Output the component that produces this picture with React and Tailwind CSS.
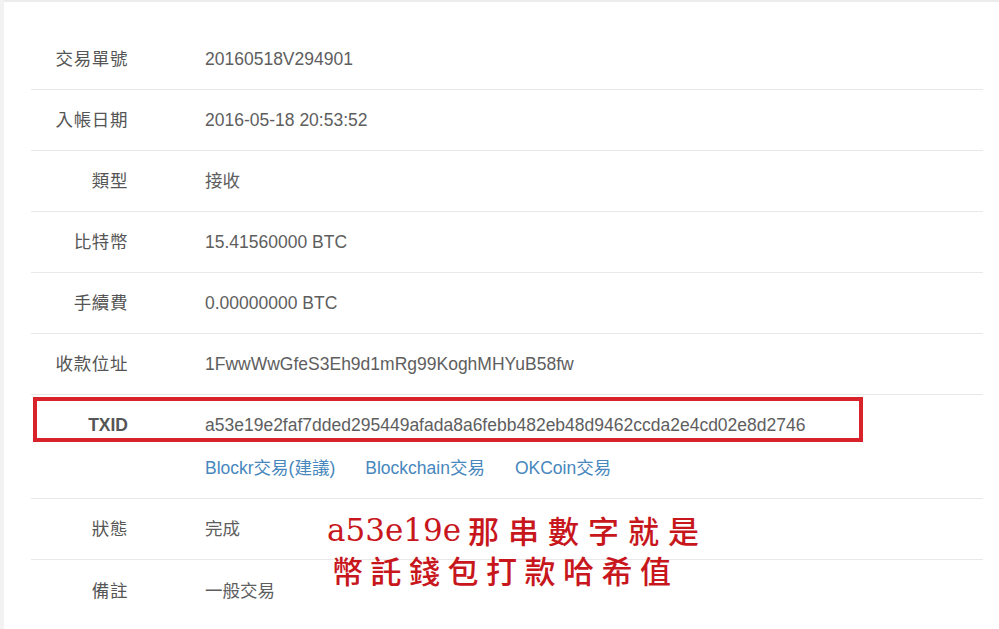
import React from "react";

const rows = [
  { label: "交易單號", value: "20160518V294901" },
  { label: "入帳日期", value: "2016-05-18 20:53:52" },
  { label: "類型", value: "接收" },
  { label: "比特幣", value: "15.41560000 BTC" },
  { label: "手續費", value: "0.00000000 BTC" },
  { label: "收款位址", value: "1FwwWwGfeS3Eh9d1mRg99KoghMHYuB58fw" },
];

const font = { fontFamily: '"Liberation Sans", "Noto Sans CJK TC", sans-serif' };

function Row({ label, value, bold, last }) {
  return (
    <div className={`flex h-[61px] items-center ${last ? "" : "border-b border-[#e8e8e8]"}`}>
      <div className={`w-[97px] text-right text-[#555] tracking-[0.6px] ${bold ? "font-bold" : ""}`}>{label}</div>
      <div className="ml-[77px] text-[#5e5e5e]">{value}</div>
    </div>
  );
}

export default function App() {
  return (
    <div className="relative flex h-[629px] w-[999px] overflow-hidden bg-white text-[17.5px] leading-[26px]" style={font}>
      <div className="w-[4px] shrink-0 bg-[#f2f2f2]" />
      <div className="flex-1 border-t-2 border-[#ececec]">
        <div className="ml-[27px] w-[952px] pt-[27px]">
          {rows.map((r) => (
            <Row key={r.label} label={r.label} value={r.value} />
          ))}
          <div className="border-b border-[#e8e8e8]">
            <div className="flex h-[60px] items-center">
              <div className="w-[97px] text-right font-bold text-[#555]">TXID</div>
              <div className="ml-[77px] text-[#5e5e5e]">
                a53e19e2faf7dded295449afada8a6febb482eb48d9462ccda2e4cd02e8d2746
              </div>
            </div>
            <div className="flex h-[43px] items-start pl-[174px] text-[#4787bd]">
              <span>Blockr交易(建議)</span>
              <span className="ml-[30px]">Blockchain交易</span>
              <span className="ml-[30px]">OKCoin交易</span>
            </div>
          </div>
          <Row label="狀態" value="完成" />
          <Row label="備註" value="一般交易" last />
        </div>
      </div>

      <div className="pointer-events-none absolute left-[33px] top-[397px] h-[45px] w-[830px] border-[4px] border-[#d8232a]" />

      <div className="absolute left-[327px] top-[510px] text-[#c8161d]">
        <div className="flex h-[40px] items-center whitespace-nowrap">
          <span className="w-[141px] text-[31px] leading-[40px]" style={{ fontFamily: '"DejaVu Serif", serif' }}>a53e19e</span>
          <span className="text-[31px] leading-[40px] font-medium tracking-[9px]" style={{ fontFamily: '"Noto Sans CJK TC", serif' }}>
            那串數字就是
          </span>
        </div>
        <div
          className="ml-[5px] flex h-[40px] items-center whitespace-nowrap text-[31px] leading-[40px] font-medium tracking-[7.5px]"
          style={{ fontFamily: '"Noto Sans CJK TC", serif' }}
        >
          幣託錢包打款哈希值
        </div>
      </div>
    </div>
  );
}
